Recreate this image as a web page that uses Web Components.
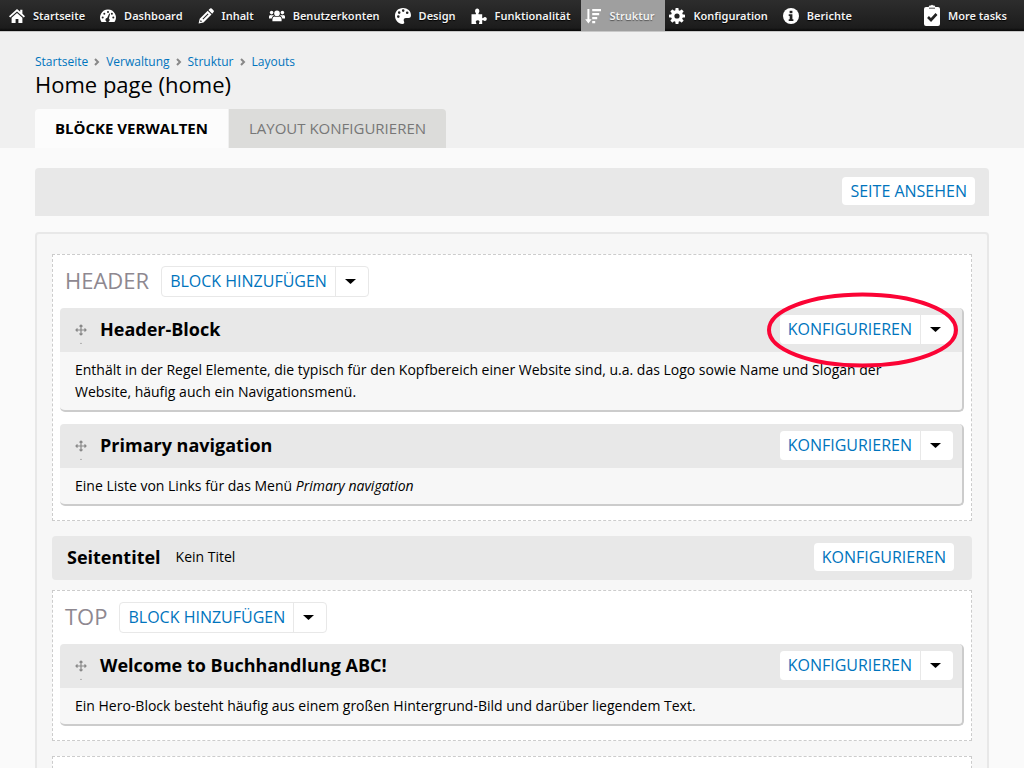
<!DOCTYPE html>
<html lang="de">
<head>
<meta charset="utf-8">
<meta name="viewport" content="width=device-width, initial-scale=1">
<title>Home page (home)</title>
<style>
html { scrollbar-width: none; }
body { margin: 0; background: #fafafa; color: #000; font: 14px/22px "Open Sans", sans-serif; }
</style>
</head>
<body>
<admin-toolbar>
  <toolbar-item icon="home">Startseite</toolbar-item>
  <toolbar-item icon="gauge">Dashboard</toolbar-item>
  <toolbar-item icon="pencil">Inhalt</toolbar-item>
  <toolbar-item icon="users">Benutzerkonten</toolbar-item>
  <toolbar-item icon="palette">Design</toolbar-item>
  <toolbar-item icon="puzzle">Funktionalität</toolbar-item>
  <toolbar-item icon="sort" active>Struktur</toolbar-item>
  <toolbar-item icon="gear">Konfiguration</toolbar-item>
  <toolbar-item icon="info">Berichte</toolbar-item>
  <toolbar-item icon="tasks" slot="end">More tasks</toolbar-item>
</admin-toolbar>
<page-header>
  <bread-crumb slot="crumbs" items="Startseite|Verwaltung|Struktur|Layouts"></bread-crumb>
  Home page (home)
  <page-tab slot="tabs" active>BLÖCKE VERWALTEN</page-tab>
  <page-tab slot="tabs">LAYOUT KONFIGURIEREN</page-tab>
</page-header>
<layout-editor>
  <action-button slot="actions">SEITE ANSEHEN</action-button>
  <layout-region label="HEADER">
    <layout-block label="Header-Block" marked>Enthält in der Regel Elemente, die typisch für den Kopfbereich einer Website sind, u.a. das Logo sowie Name und Slogan der Website, häufig auch ein Navigationsmenü.</layout-block>
    <layout-block label="Primary navigation">Eine Liste von Links für das Menü <em>Primary navigation</em></layout-block>
  </layout-region>
  <title-bar label="Seitentitel">Kein Titel</title-bar>
  <layout-region label="TOP">
    <layout-block label="Welcome to Buchhandlung ABC!">Ein Hero-Block besteht häufig aus einem großen Hintergrund-Bild und darüber liegendem Text.</layout-block>
  </layout-region>
  <layout-region></layout-region>
</layout-editor>

<script>
const define = (name, render) => customElements.define(name, class extends HTMLElement {
  connectedCallback() {
    if (this.shadowRoot) return;
    this.attachShadow({ mode: 'open' }).innerHTML = render(this);
  }
});

const gearTeeth = [0, 45, 90, 135, 180, 225, 270, 315]
  .map(a => `<rect x="6.4" y="0" width="3.2" height="4" rx=".7" transform="rotate(${a} 8 8)"/>`).join('');

const icons = {
  home: '<path d="M8 1 0 8.2l1.2 1.3L8 3.6l6.8 5.9L16 8.2l-2.6-2.4V1.8h-2.2v2z"/><path d="M8 5 2.6 9.7V15h4v-4h2.8v4h4V9.7z"/>',
  gauge: '<path d="M8 1.5A8 8 0 0 0 1.5 14h13A8 8 0 0 0 8 1.5z"/><g fill="#222"><circle cx="2.7" cy="9.6" r="1"/><circle cx="4.3" cy="5.7" r="1"/><circle cx="8" cy="4.1" r="1"/><circle cx="11.9" cy="5.7" r="1"/><circle cx="13.3" cy="9.6" r="1"/><path d="m9.2 5.6-2.1 4.5a2 2 0 1 0 1.8.5l1.2-4.8z"/></g>',
  pencil: '<path fill-rule="evenodd" d="m.6 15.6 1.1-4.8 8-8 3.8 3.8-8 8zM2.1 14l2-.5-1.4-1.4zM4.5 10.8l.7.7 5.3-5.3-.7-.7z"/><path d="M10.5 2.1 12.1.6q.8-.7 1.6 0l1.9 1.9q.8.8 0 1.6l-1.4 1.7z"/>',
  users: '<circle cx="8" cy="5.4" r="2.8"/><path d="M3.4 13.3V11q0-2.5 2.4-2.6 2.2 1.3 4.4 0 2.4.1 2.4 2.6v2.3z"/><circle cx="2.6" cy="4.6" r="1.8"/><circle cx="13.4" cy="4.6" r="1.8"/><path d="M0 10.4V8.6q.1-1.5 1.4-1.6 1.2.6 2.8-.1l.6.8Q3 8.5 2.7 10.4zM16 10.4V8.600q-.1-1.500-1.400-1.600-1.200.600-2.800-.1l-.6.800q1.800.800 2.100 2.700z"/>',
  palette: '<path fill-rule="evenodd" d="M8 0C3 0 0 3.600 0 7.800c0 4.500 3.400 8.200 7.300 8.200 2 0 2.300-1.200 1.700-2.400-.9-2 .1-3.600 2-3.600h2.500C15.300 10 16 8.700 16 7.200 16 3 12.500 0 8 0zM3.300 7.300a1.300 1.300 0 1 1 0 2.600 1.300 1.300 0 0 1 0-2.600zM4.200 3.300a1.300 1.300 0 1 1 0 2.600 1.300 1.300 0 0 1 0-2.600zM8.200 1.300a1.300 1.300 0 1 1 0 2.600 1.300 1.300 0 0 1 0-2.600zM12.200 3.500a1.300 1.300 0 1 1 0 2.600 1.300 1.300 0 0 1 0-2.600z"/>',
  puzzle: '<path d="M.5 6.200h4.300q.5-.4 0-1-1.500-1.800-.4-3.600Q6.200-.4 8 1.600q1.100 1.800-.4 3.600-.5.600 0 1h3.600v3.600q.4.600 1 .1 1.600-1.600 3-.5 1.300 1.300.2 2.800-1.400 1.500-3.100.1-.7-.5-1.100.1V16H8.100q-.4-.6.100-1.200.9-1.300-.3-2.300-1.800-.9-2.900.4-.6 1 .2 1.900.4.700 0 1.200H.5z"/>',
  sort: '<path d="M2.400 1h2v10.300h2.200L3.400 15.600.2 11.300h2.200zM7.200 1H16v2.300H7.200zM7.200 5h7v2.300h-7zM7.200 9h5v2.300h-5zM7.200 13h3v2.300h-3z"/>',
  gear: `<path fill-rule="evenodd" d="M8 2a6 6 0 1 1 0 12A6 6 0 0 1 8 2zm0 3.400a2.600 2.600 0 1 0 0 5.200 2.600 2.600 0 0 0 0-5.200z"/>${gearTeeth}`,
  info: '<circle cx="8" cy="8" r="8"/><g fill="#222"><rect x="6.600" y="2.800" width="2.800" height="2.400"/><path d="M5.700 6.300h3.700v5h1v1.800H5.700v-1.800h1V8.100h-1z"/></g>',
  tasks: '<path d="M2-1h2.600l.9-1.500H7q1-1.500 2 0h1.500l.9 1.500H14q2 0 2 2v15q0 2-2 2H2q-2 0-2-2V1q0-2 2-2z"/><path fill="none" stroke="#222" stroke-width="2.600" d="m4 9 3 3 5.500-6"/><path stroke="#222" stroke-width=".8" d="M5 .2h6"/>'
};

define('admin-toolbar', () => `<style>
  :host { display: block; border-bottom: 1px solid #c8c8c8; }
  nav { display: flex; height: 31px; padding: 0 6px 0 5px; background: linear-gradient(#2d2d2d, #1c1c1c 90%, #080808); }
  .main { display: flex; flex: 1; }
</style><nav aria-label="Administration"><div class="main"><slot></slot></div><slot name="end"></slot></nav>`);

define('toolbar-item', el => `<style>
  :host { display: flex; }
  a { display: flex; align-items: center; gap: 8px; padding: 0 11px 0 4px; color: #f2f2f2; text-decoration: none;
      font: 600 11px/31px "Noto Sans", sans-serif; white-space: nowrap; text-shadow: 0 1px 1px #000; }
  :host([active]) a { background: #9f9f9f; text-shadow: 0 1px 1px #555; }
  svg { width: 16px; height: 16px; fill: #fff; overflow: visible; }
</style><a href="#"><svg viewBox="0 0 16 16" aria-hidden="true">${icons[el.getAttribute('icon')]}</svg><slot></slot></a>`);

define('page-header', () => `<style>
  :host { display: block; background: #f0f0f0; padding: 20px 35px 0; }
  h1 { margin: 0 0 13px; font: 22px/24px "Open Sans", sans-serif; }
  .tabs { display: flex; gap: 1px; }
</style><header><slot name="crumbs"></slot><h1><slot></slot></h1><nav class="tabs"><slot name="tabs"></slot></nav></header>`);

define('bread-crumb', el => `<style>
  :host { display: block; font-size: 12px; line-height: 20px; }
  nav { display: flex; align-items: center; gap: 6px; }
  a { color: #0074bd; text-decoration: none; }
  svg { width: 6px; height: 8px; fill: none; stroke: #888; stroke-width: 2; }
</style><nav aria-label="Breadcrumb">${el.getAttribute('items').split('|').map(t => `<a href="#">${t}</a>`)
  .join('<svg viewBox="0 0 6 8" aria-hidden="true"><path d="m1 1 3 3-3 3"/></svg>')}</nav>`);

define('page-tab', () => `<style>
  :host { display: block; }
  a { display: block; padding: 0 20px; font-size: 15px; line-height: 39px; color: #777; background: #dcdcda; text-decoration: none; border-radius: 0 4px 0 0; }
  :host([active]) a { color: #000; background: #fcfcfc; font-weight: 700; border-radius: 4px 0 0 0; }
</style><a href="#"><slot></slot></a>`);

define('action-button', () => `<style>
  :host { display: inline-block; }
  a { display: block; padding: 0 8px; background: #fff; color: #0074bd; font-size: 16px; line-height: 28px; border-radius: 4px; text-decoration: none; white-space: nowrap; }
</style><a href="#"><slot></slot></a>`);

define('split-button', () => `<style>
  :host { display: inline-flex; background: #fff; border-radius: 4px; position: relative; }
  :host([outlined]) { border: 1px solid #e8e8e8; }
  button { border: 0; margin: 0; background: none; color: #0074bd; font: 16px/29px "Open Sans", sans-serif; padding: 0 8px; white-space: nowrap; }
  .more { width: 33px; padding: 0 9px; border-left: 1px solid #e8e8e8; display: flex; align-items: center; }
  svg { display: block; width: 11px; height: 5px; }
</style><button type="button"><slot></slot></button><button class="more" type="button" aria-label="Weitere Aktionen"><svg viewBox="0 0 11 5" aria-hidden="true"><path d="M0 0h11L5.500 5z"/></svg></button><slot name="mark"></slot>`);

define('highlight-ring', () => `<style>
  :host { position: absolute; left: -13px; top: -23px; width: 191px; height: 76px; pointer-events: none; z-index: 2; }
  svg { display: block; width: 100%; height: 100%; }
</style><svg viewBox="0 0 191 76" aria-hidden="true"><ellipse cx="95.500" cy="38" rx="93.500" ry="35.500" fill="none" stroke="#fb0435" stroke-width="4"/></svg>`);

define('layout-editor', () => `<style>
  :host { display: block; padding: 20px 35px; }
  .actions { display: flex; align-items: center; justify-content: flex-end; height: 48px; padding: 0 14px 2px; box-sizing: border-box; background: #e8e8e8; border-radius: 4px 4px 0 0; }
  .panel { margin-top: 16px; padding: 20px 15px; border: 2px solid #e8e8e8; border-radius: 4px; background: #f7f7f7; }
</style><main><div class="actions"><slot name="actions"></slot></div><div class="panel"><slot></slot></div></main>`);

define('layout-region', el => {
  const label = el.getAttribute('label');
  return `<style>
  :host { display: block; margin-bottom: 15px; padding: 11px 7px 14px; min-height: 20px; background: #fff; border: 1px dashed #ccc; }
  header { display: flex; gap: 12px; padding-left: 5px; margin-bottom: 11px; }
  h2 { margin: 0; color: #8e8890; font: 22px/28px "Open Sans", sans-serif; }
  .blocks { display: grid; gap: 12px; }
</style><section>${label ? `<header><h2>${label}</h2><split-button outlined>BLOCK HINZUFÜGEN</split-button></header>` : ''}<div class="blocks"><slot></slot></div></section>`;
});

define('layout-block', el => `<style>
  :host { display: block; background: #f7f7f7; border: solid #ccc; border-width: 0 2px 2px 0; border-radius: 5px; }
  header { display: flex; align-items: center; box-sizing: border-box; height: 44px; padding: 0 9px 2px 15px; background: #e8e8e8; border-radius: 4px 4px 0 0; }
  .grip { width: 12px; height: 20px; margin-right: 13px; align-self: flex-end; padding-bottom: 6px; }
  h3 { flex: 1; margin: 0; font: 700 18px/42px "Open Sans", sans-serif; }
  .body { padding: 7px 24px 7px 15px; }
</style><article><header><svg class="grip" viewBox="0 0 12 20" aria-hidden="true"><path fill="none" stroke="#888" stroke-width="1.200" d="M6 1v10M1 6h10M4.500 2.500 6 1l1.500 1.500M4.500 9.500 6 11l1.500-1.500M2.500 4.500 1 6l1.500 1.500M9.500 4.500 11 6 9.500 7.500"/><circle cx="6" cy="19.400" r=".6" fill="#888"/></svg><h3>${el.getAttribute('label')}</h3><split-button>KONFIGURIEREN${el.hasAttribute('marked') ? '<highlight-ring slot="mark"></highlight-ring>' : ''}</split-button></header><div class="body"><slot></slot></div></article>`);

define('title-bar', el => `<style>
  :host { display: flex; align-items: center; gap: 15px; box-sizing: border-box; height: 44px; margin-bottom: 10px; padding: 0 18px 2px 15px; background: #e8e8e8; border-radius: 4px; }
  h2 { margin: 0; font: 700 18px/42px "Open Sans", sans-serif; }
  p { flex: 1; margin: 0; }
</style><h2>${el.getAttribute('label')}</h2><p><slot></slot></p><action-button>KONFIGURIEREN</action-button>`);
</script>
</body>
</html>
